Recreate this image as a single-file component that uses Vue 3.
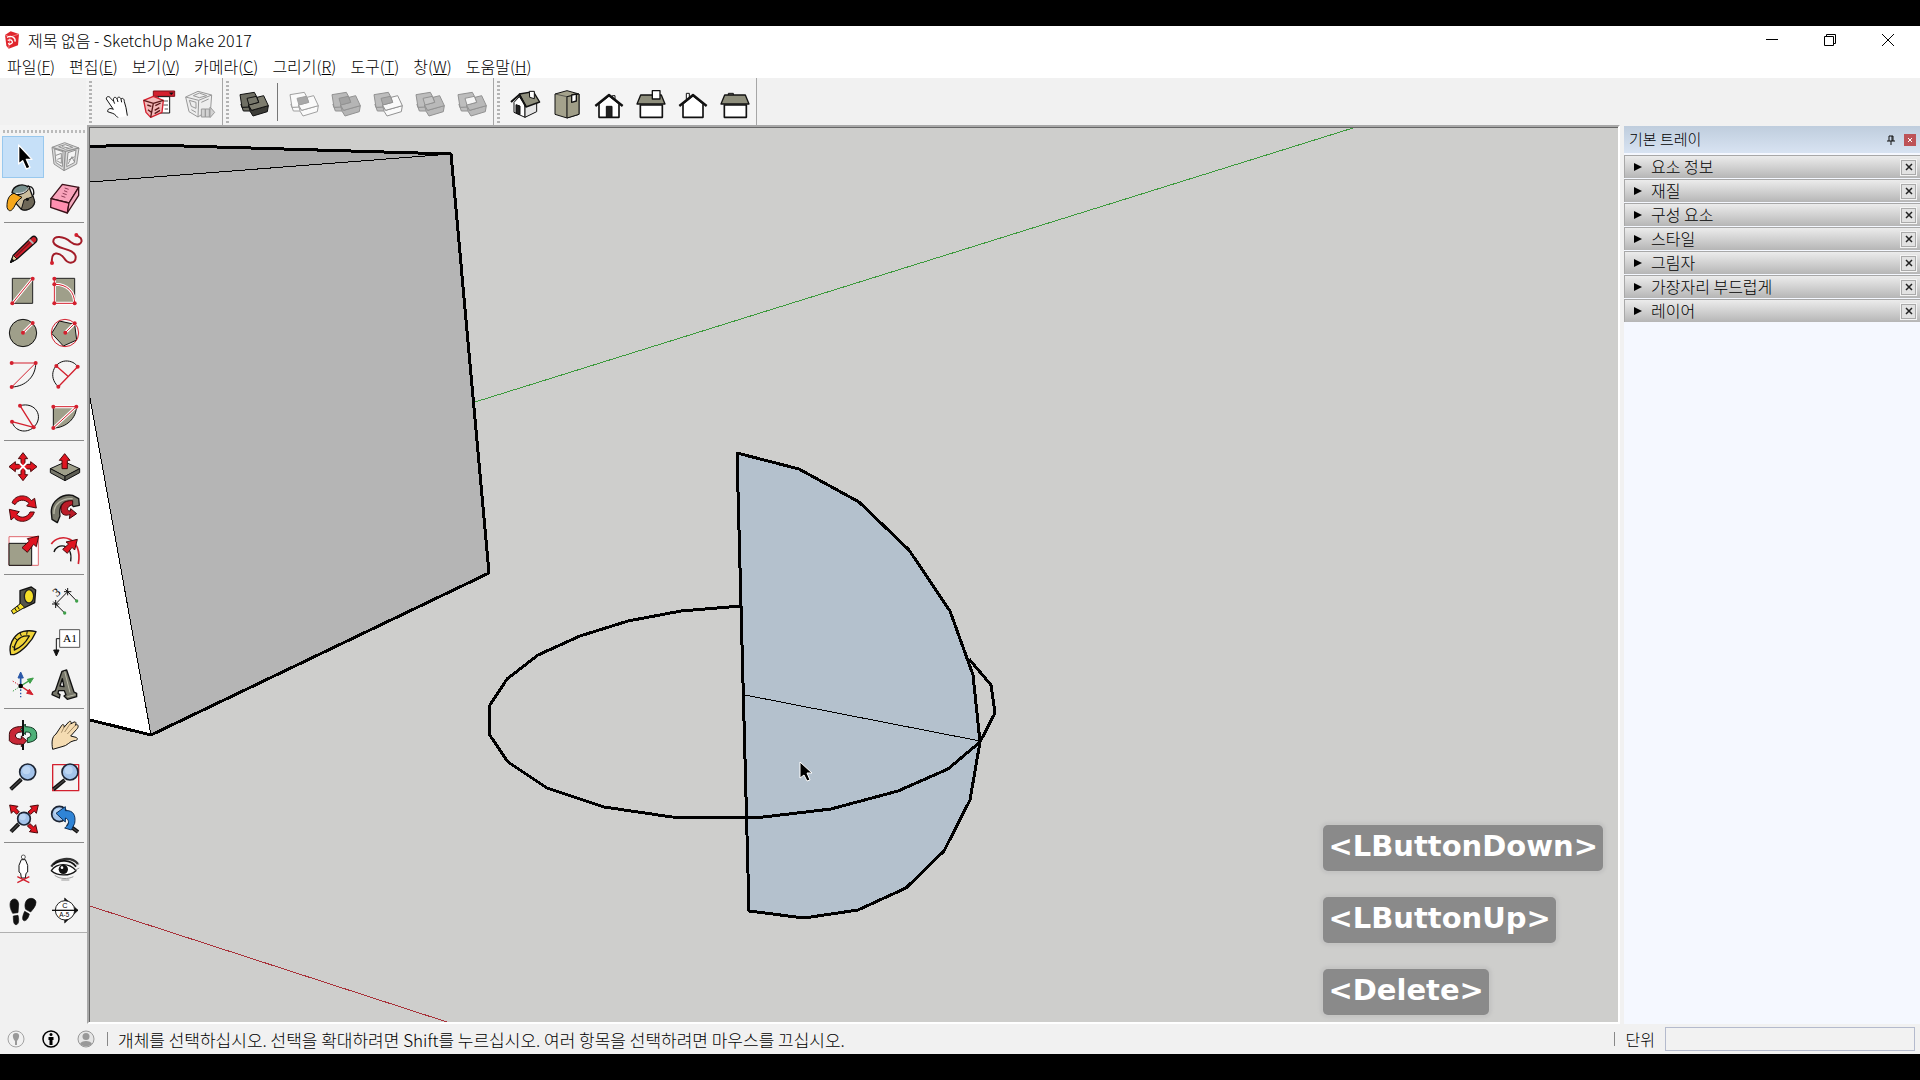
<template>
  <div class="screen">
    <div class="app">

      <header class="titlebar">
        <svg class="logo" viewBox="0 0 48 54">
          <path d="M3 12 L20 1 L45 9 L42 43 L14 53 L7 44 Z" fill="#e0262d" />
          <path d="M3 12 L18 18 L45 9 M18 18 L14 53" stroke="#f8a6a6" stroke-width="2" fill="none" />
          <path d="M9 19 C22 12 36 20 33 32 M11 28 C20 24 26 28 25 36 M13 36 L17 42 M25 36 L17 40" stroke="#fff" stroke-width="4" fill="none" />
        </svg>
        <h1>제목 없음 - SketchUp Make 2017</h1>
        <div class="win-buttons">
          <button aria-label="최소화"><svg viewBox="0 0 12 12"><path d="M0 5.5 H12" /></svg></button>
          <button aria-label="이전 크기로"><svg viewBox="0 0 12 12"><path d="M.5 2.5 H9.5 V11.5 H.5 Z M2.5 2.5 V.5 H11.5 V9.5 H9.5" /></svg></button>
          <button aria-label="닫기"><svg viewBox="0 0 12 12"><path d="M0 0 L12 12 M12 0 L0 12" /></svg></button>
        </div>
      </header>

      <nav class="menubar">
        <button v-for="m in menus" :key="m.key">{{ m.label }}(<u>{{ m.key }}</u>)</button>
      </nav>

      <div class="toolbar">
        <div v-for="(group, i) in topGroups" :key="i" class="group">
          <span class="grip"></span>
          <template v-for="tool in group" :key="tool.name">
            <span v-if="tool.name === 'sep'" class="vsep"></span>
            <button v-else class="tool" :aria-label="tool.name">
              <svg viewBox="0 0 126 126" v-html="tool.art"></svg>
            </button>
          </template>
        </div>
      </div>

      <main class="workspace">
        <aside class="palette">
          <span class="grip-h"></span>
          <div v-for="(group, i) in sideGroups" :key="i" class="tools">
            <button
              v-for="tool in group"
              :key="tool.name"
              class="tool"
              :class="{ active: tool.name === activeTool }"
              :aria-label="tool.name"
              @click="activeTool = tool.name"
            >
              <svg viewBox="0 0 126 126" v-html="tool.art"></svg>
            </button>
          </div>
        </aside>

        <section class="viewport">
          <svg class="scene" viewBox="90 128 1528 894" preserveAspectRatio="xMinYMin slice">
            <!-- axes -->
            <path d="M475 402 L1353 128" stroke="#3c9a3c" />
            <path d="M90 906 L447 1022" stroke="#a8323a" />
            <!-- box -->
            <path d="M90 147 L123 145 L150 145 L451 154 L90 182 Z" fill="#ababab" />
            <path d="M90 182 L451 154 L489 573 L151 735 L90 398 Z" fill="#b5b5b5" />
            <path d="M90 398 L151 735 L90 720 Z" fill="#fff" />
            <path d="M90 182 L451 154 M90 398 L151 735" stroke="#000" />
            <path d="M90 147 L123 145 L150 145 L451 154 L489 573 L151 735 L90 720" class="edge" />
            <!-- half disc standing on the circle -->
            <path d="M737 453 L799 469 L859 502 L909 550 L950 611 L973 675 L980 742 L970 800 L944 851 L906 888 L858 910 L804 918 L749 911 Z" class="edge face" />
            <path d="M741 606 L681 611 L628 621 L580 636 L538 655 L507 679 L490 705 L489 734 L508 762 L547 788 L604 807 L672 817 L755 818 L831 809 L898 791 L948 769 L980 742 L995 713 L991 685 L969 659" class="edge" />
            <path d="M745 695 L980 741" stroke="#000" />
            <path d="M800 762 V778 L804 775 L807 781 L810 780 L807 773 H812 Z" class="cursor" />
          </svg>
          <div class="keys">
            <kbd v-for="k in pressed" :key="k">{{ k }}</kbd>
          </div>
        </section>

        <aside class="tray">
          <div class="tray-head">
            <h2>기본 트레이</h2>
            <button class="pin" aria-label="고정"><svg viewBox="0 0 8 10"><path d="M2 6 V1 H6 V6 M5 1 V6 M0 6 H8 M4 6 V10" /></svg></button>
            <button class="tray-close" aria-label="트레이 닫기"><svg viewBox="0 0 6 6"><path d="M1 1 L5 5 M5 1 L1 5" /></svg></button>
          </div>
          <div v-for="p in panels" :key="p" class="panel">
            <button class="panel-title"><i></i>{{ p }}</button>
            <button class="panel-close" :aria-label="p + ' 닫기'"><svg viewBox="0 0 8 8"><path d="M1 1 L7 7 M7 1 L1 7" /></svg></button>
          </div>
        </aside>
      </main>

      <footer class="status">
        <svg class="badge" viewBox="0 0 18 18">
          <circle cx="9" cy="9" r="8" fill="none" stroke="#a3a3a3" />
          <path d="M9 3 C4 3 6 9 8 11 V15 H10 V11 C12 9 14 3 9 3 Z" fill="#999" />
        </svg>
        <svg class="badge" viewBox="0 0 18 18">
          <circle cx="9" cy="9" r="8" fill="none" stroke="#000" stroke-width="1.5" />
          <circle cx="9" cy="4.5" r="1.5" />
          <path d="M6.5 7 H11.5 V10 H10.5 V15 H7.5 V10 H6.5 Z" />
        </svg>
        <svg class="badge" viewBox="0 0 18 18">
          <circle cx="9" cy="9" r="8" fill="#e6e6e6" stroke="#999" />
          <circle cx="9" cy="6.5" r="3.5" fill="#999" />
          <path d="M3 14 C4 10 14 10 15 14 C12 17 6 17 3 14 Z" fill="#999" />
        </svg>
        <span class="bar"></span>
        <p>개체를 선택하십시오. 선택을 확대하려면 Shift를 누르십시오. 여러 항목을 선택하려면 마우스를 끄십시오.</p>
        <span class="bar"></span>
        <label for="vcb">단위</label>
        <input id="vcb" type="text">
      </footer>

    </div>
  </div>
</template>

<script setup>
import { ref } from 'vue'

const activeTool = ref('선택')

const menus = [
  { label: '파일', key: 'F' },
  { label: '편집', key: 'E' },
  { label: '보기', key: 'V' },
  { label: '카메라', key: 'C' },
  { label: '그리기', key: 'R' },
  { label: '도구', key: 'T' },
  { label: '창', key: 'W' },
  { label: '도움말', key: 'H' }
]

const panels = ['요소 정보', '재질', '구성 요소', '스타일', '그림자', '가장자리 부드럽게', '레이어']

const pressed = ['<LButtonDown>', '<LButtonUp>', '<Delete>']

// small helpers for the icon drawings, all on a 126 grid
const path = (d, fill = 'none', stroke = '#111', w = 3) =>
  `<path d="${d}" fill="${fill}" stroke="${stroke}" stroke-width="${w}" stroke-linejoin="round"/>`
const red = '#d3202e'
const tan = '#9f9f8a'
const dots = (...pts) => pts.map(([x, y]) => `<circle cx="${x}" cy="${y}" r="6" fill="${red}"/>`).join('')
const redLine = d => path(d, 'none', '#fff', 9) + path(d, 'none', red, 3)

// two overlapping slabs used by every solid tool
const backTop = 'M21 35 L64 28 L72 43 L77 58 L48 66 L51 72 L27 73 Z'
const backSide = 'M24 64 L27 73 L51 70 L55 84 L31 84 Z'
const frontTop = 'M72 43 L92 38 L106 68 L56 82 L46 66 L77 58 Z'
const frontSide = 'M56 82 L106 68 L103 86 L60 99 L52 86 L46 66 Z'
const core = 'M42 46 L70 40 L77 58 L48 66 Z'
const solid = (a, b, c, line, side = b) =>
  path(backSide, a, line) + path(backTop, a, line) + path(frontSide, side, line) + path(frontTop, b, line) + path(core, c, line)

const lens = (x, y, r) =>
  `<circle cx="${x}" cy="${y}" r="${r}" fill="#a3c3ea" stroke="#1c2433" stroke-width="5"/>` +
  `<circle cx="${x - 4}" cy="${y - 5}" r="${r / 2}" fill="#bdd6f3"/>`
const handle = d => path(d, 'none', '#111', 12) + path(d, 'none', '#444', 4)

const cage = (line, fill) =>
  path('M24 34 L62 20 L105 36 L98 84 L60 104 L30 84 Z', fill, line, 3) +
  path('M32 39 L57 47 L55 92 L36 80 Z M72 50 L96 42 L91 80 L68 92 Z M44 32 L64 26 L86 34 L64 40 Z', '#f4f4f4', line, 3) +
  path('M24 34 L64 46 L105 36 M64 46 L60 104', 'none', line, 4) +
  path('M36 58 L52 52 L52 82 L38 74 M52 66 L40 70 M74 72 L92 62 M72 84 L84 62 L90 76 M54 32 L74 36', 'none', line, 3)

const topGroups = [
  [
    {
      name: '인터랙트',
      art: path('M31 48 C30 40 40 38 44 46 L53 55 C50 42 58 40 63 47 C66 40 73 42 75 48 C81 43 85 49 85 56 L90 74 L94 98 L66 104 L60 98 C54 90 44 90 35 86 C34 78 42 74 52 79 Z', '#fff', '#fff', 1) +
        path('M66 104 L60 98 C54 90 44 90 35 86 C34 78 42 74 52 79 L31 48 C30 40 40 38 44 46 L53 55 C50 42 58 40 63 47 C66 40 73 42 75 48 C81 43 85 49 85 56 L90 74 L94 98 M53 55 L56 62 M63 47 L66 57 M75 48 L77 58')
    },
    {
      name: '구성 요소 옵션',
      art: path('M46 24 H110 V40 H46 Z', red, '#7a1018', 3) + path('M94 29 H106 L100 36 Z', '#111', '#111', 1) +
        path('M60 41 H95 V90 H60 Z', '#fff') + path('M76 54 H90 M76 66 H90 M80 78 H90', 'none', '#555', 3) +
        path('M17 52 L46 40 L76 52 L72 88 L38 103 L24 88 Z', '#f3b9b9', red, 4) +
        path('M17 52 L46 61 L76 52 M46 61 L38 103 M28 66 L40 70 M52 68 L68 60 M50 82 L64 74 M30 80 L40 88 M50 92 L66 82', 'none', '#5a1818', 4)
    },
    {
      name: '구성 요소 속성',
      art: path('M17 42 L54 25 L95 36 L92 76 L54 102 L27 86 Z', '#eee', '#999') +
        path('M17 42 L56 52 L95 36 M56 52 L54 102 M28 52 L48 58 V76 L34 70 Z M64 58 L86 48 M34 80 L48 88 M40 38 L58 30 L80 38 L58 44 Z', 'none', '#999') +
        path('M64 78 H76 V102 H64 Z M76 78 H88 V102 H76 Z M90 72 L104 88 L90 104 Z', '#d2d2d2', '#999')
    }
  ],
  [
    { name: '외곽 셸', art: solid('#6f6f64', '#7e7d6f', '#77776b', '#111', '#3d3d38') },
    { name: 'sep' },
    { name: '교차', art: solid('#fafafa', '#fafafa', '#a8a8a8', '#a0a0a0') },
    { name: '결합', art: solid('#bababa', '#b5b5b5', '#a2a2a2', '#929292') },
    { name: '빼기', art: solid('#bdbdbd', '#fafafa', '#aaa', '#929292') },
    { name: '트림', art: solid('#bdbdbd', '#b9b9b9', '#c5c5c5', '#929292') },
    { name: '분할', art: solid('#bdbdbd', '#b9b9b9', '#f6f6f6', '#929292') }
  ],
  [
    {
      name: '등각',
      art: path('M30 58 L46 41 L63 65 V103 L30 88 Z', '#fff') + path('M63 66 L98 54 V86 L63 103 Z', '#e5e5e5') +
        path('M36 65 L48 69 V95 L36 90 Z', '#222') + path('M46 33 L88 26 L107 57 L66 72 Z', '#8e8e7c', '#111', 4) +
        path('M21 57 L46 35 L66 71', 'none', '#111', 6) + path('M76 25 H91 V47 L77 43 Z', '#fff')
    },
    {
      name: '위',
      art: path('M27 33 L63 23 L99 33 V94 L63 105 L27 94 Z', '#a4a28c') + path('M63 41 V105 M27 33 L63 41 L99 33', 'none', '#333', 2) +
        path('M63 41 L99 33 V94 L63 105 Z', '#a09e88') + path('M77 36 L91 33 V54 L77 58 Z', '#fff', '#111', 4)
    },
    {
      name: '앞',
      art: path('M73 44 V38 H81 V52', '#fff') + path('M33 62 L63 38 L93 62 V103 H33 Z', '#fff', '#111', 5) +
        path('M22 69 L63 36 L104 69', 'none', '#111', 7) + path('M55 70 H72 V103 H55 Z', '#222')
    },
    {
      name: '오른쪽',
      art: path('M31 66 H97 V103 H31 Z', '#fff', '#111', 5) + path('M32 36 H94 L105 63 H21 Z', '#8e8e7c', '#111', 4) + path('M67 23 H90 V48 H67 Z', '#fff', '#111', 4)
    },
    {
      name: '뒤',
      art: path('M43 49 V31 H52 V45', '#fff') + path('M33 62 L63 38 L93 62 V103 H33 Z', '#fff', '#111', 5) +
        path('M22 69 L63 36 L104 69', 'none', '#111', 7)
    },
    {
      name: '왼쪽',
      art: path('M43 36 V31 H58 V36', '#999') + path('M31 66 H97 V103 H31 Z', '#fff', '#111', 5) + path('M32 36 H94 L105 63 H21 Z', '#8e8e7c', '#111', 4)
    }
  ]
]

const sideGroups = [
  [
    { name: '선택', art: path('M50 27 V84 L62 74 L73 99 L84 94 L73 70 H90 Z', '#000', '#fff', 4) },
    { name: '구성 요소 만들기', art: cage('#929292', '#dcdcdc') },
    {
      name: '페인트통',
      art: path('M76 34 C80 16 100 30 94 52', 'none', '#111', 4) + path('M36 38 L80 24 L98 72 C94 92 72 100 58 94 L42 76 Z', '#cbbd9d', '#111', 4) +
        path('M58 94 L66 66 L94 55 L98 72 C94 92 72 100 58 94', '#6e6757', '#111', 3) +
        path('M30 44 C34 22 62 14 80 28 C76 44 48 56 30 44 Z', '#78908e', '#111', 4) + path('M40 46 C66 48 74 38 80 28', 'none', '#fff', 3) +
        path('M36 46 C22 50 14 64 15 88 C20 104 30 100 38 84 C42 72 52 64 60 58 Z', '#f6a81c', '#111', 3) +
        '<circle cx="76" cy="64" r="5" fill="#111"/>'
    },
    {
      name: '지우개',
      art: path('M55 19 L104 28 L75 75 L21 62 Z', '#f9a3bb', '#3a1018', 4) + path('M21 62 L75 75 L70 105 L20 88 Z', '#ff8fb0', '#3a1018', 4) +
        path('M104 28 V52 L70 105 L75 75 Z', '#f3a9bd', '#3a1018', 4) +
        path('M62 30 L74 34 M60 38 L70 42 M56 46 L68 50 M52 54 L64 58', 'none', '#8c3b55', 3)
    }
  ],
  [
    {
      name: '선',
      art: path('M26 103 L34 82 L90 27 C98 20 110 32 102 42 L45 93 Z', '#cf1f2b', '#111', 4) + path('M26 103 L34 82 L45 93 Z', '#e5cd9d') +
        path('M26 103 L30 93 L36 98 Z', '#111') + path('M82 35 L94 47', 'none', '#b9b9b9', 6) + path('M42 84 L84 43', 'none', '#7b121a', 4)
    },
    {
      name: '자유형',
      art: path('M24 104 C20 68 46 72 60 90 C74 112 96 106 95 86 C90 58 34 66 28 42 C26 20 60 24 80 42 C100 58 120 46 110 30 L97 21', 'none', '#a31c28', 6) + dots([24, 105], [97, 21])
    },
    { name: '직사각형', art: path('M31 25 H92 V100 H31 Z', tan, '#222', 3) + redLine('M31 100 L92 25') + dots([31, 100], [92, 26]) },
    { name: '회전된 직사각형', art: path('M31 25 H92 V100 H31 Z', tan, '#222', 3) + redLine('M31 25 V100 H92 M31 43 C70 42 92 66 92 100') + dots([31, 26], [31, 43], [31, 100], [92, 100]) },
    { name: '원', art: `<circle cx="63" cy="63" r="41" fill="${tan}" stroke="#111" stroke-width="3"/>` + redLine('M63 62 L92 33') + dots([63, 62], [92, 33]) },
    { name: '다각형', art: path('M23 64 L46 27 L92 37 L98 84 L58 102 Z', tan) + `<circle cx="63" cy="63" r="41" fill="none" stroke="${red}" stroke-width="3"/>` + redLine('M64 62 L92 34') + dots([64, 62], [92, 34]) },
    { name: '호', art: path('M101 27 C102 65 72 98 29 99') + path('M29 27 H101 L29 99', 'none', red) + dots([29, 27], [101, 27], [29, 99]) },
    { name: '2점 호', art: path('M43 98 C10 68 30 24 64 21 C82 20 94 28 101 38') + path('M43 98 L101 38 M37 36 L71 66', 'none', red, 4) + dots([37, 36], [101, 38], [43, 98]) },
    { name: '3점 호', art: path('M54 29 C100 16 128 62 95 94 C72 114 38 106 30 77') + path('M54 29 L95 94 L30 77', 'none', red, 4) + dots([54, 29], [30, 77], [95, 94]) },
    { name: '파이', art: path('M28 32 H97 C98 66 66 96 28 96 Z', tan) + redLine('M28 32 H97 L28 96') + dots([28, 32], [97, 32], [28, 96]) }
  ],
  [
    {
      name: '이동',
      art: path('M63 20 L77 38 H69 V55 H86 V47 L105 62 L86 77 V69 H69 V86 H77 L63 104 L49 86 H57 V69 H40 V77 L21 62 L40 47 V55 H57 V38 H49 Z', '#df1420', '#4a0a0c') +
        path('M48 47 L78 77 M78 47 L48 77', 'none', '#fff', 6)
    },
    {
      name: '밀기/끌기',
      art: path('M19 68 L63 48 L107 68 L63 91 Z', tan) + path('M19 68 L63 91 V104 L19 80 Z', '#77776a') + path('M107 68 L63 91 V104 L107 80 Z', '#5c5c52') +
        path('M62 23 L78 43 H70 V68 H54 V43 H46 Z', '#df1420', '#4a0a0c')
    },
    {
      name: '회전',
      art: path('M30 44 C40 18 76 18 88 38 L98 31 L103 60 L74 54 L81 46 C68 32 48 34 39 50 Z', '#df1420', '#4a0a0c') +
        path('M97 72 C86 106 48 106 36 88 L27 96 L22 64 L52 71 L44 79 C56 94 78 88 84 72 Z', '#df1420', '#4a0a0c')
    },
    {
      name: '따라가기',
      art: path('M22 74 C20 40 54 16 86 22 L104 32 L106 52 L88 56 L76 40 C54 40 44 58 48 84 L40 104 L24 94 Z', '#77776a', '#111', 4) +
        path('M30 78 C28 48 54 30 86 32', 'none', '#b8b8a6', 4) +
        path('M86 38 C58 36 44 54 54 76 C62 84 72 82 78 79 L76 92 L98 77 L80 62 L79 69 C66 70 68 54 86 50 Z', '#bb1c28', '#3d080b', 3)
    },
    {
      name: '배율',
      art: path('M21 20 H109 V106 H21 Z', '#fff', '#e06a70', 3) + path('M21 40 H89 V106 H21 Z', tan) +
        path('M110 18 L103 50 L95 43 L76 67 L60 53 L82 33 L76 26 Z', '#df1420', '#4a0a0c')
    },
    {
      name: '오프셋',
      art: path('M22 42 C46 6 118 20 103 102', 'none', red, 5) + path('M30 66 C38 38 88 38 80 94', 'none', '#111', 4) +
        path('M100 28 L92 60 L84 52 L70 70 L56 58 L74 42 L66 36 Z', '#df1420', '#4a0a0c')
    }
  ],
  [
    {
      name: '줄자',
      art: path('M54 32 L88 21 L101 30 L98 68 L66 84 L54 74 Z', '#55554c', '#111', 4) + '<ellipse cx="81" cy="49" rx="14" ry="20" fill="#f4de28" stroke="#222" stroke-width="4"/>' +
        path('M56 70 L28 92 L34 102 L68 82 Z', '#f4de28') + path('M46 78 L52 88 M38 84 L44 94', 'none', '#111', 3)
    },
    {
      name: '치수',
      art: path('M35 72 L71 35 M71 35 L98 63 M35 72 L62 99 M35 60 V84 M24 72 H46 M28 65 L42 79 M71 24 V46 M60 35 H82 M64 28 L78 42', 'none', '#111', 3) +
        '<circle cx="98" cy="63" r="5" fill="#3fa04a"/><circle cx="62" cy="99" r="5" fill="#3fa04a"/><text x="0" y="0" transform="translate(38 52) rotate(-40)" font-family="Liberation Serif, serif" font-size="36">3</text>'
    },
    {
      name: '각도기',
      art: path('M102 29 C76 22 50 28 36 48 C24 64 22 82 26 98 L36 98 C60 90 90 58 102 29 Z M82 42 C64 40 52 46 44 58 C38 68 36 74 37 84 C54 78 72 60 82 42 Z', '#f0d43a', '#111', 4) +
        path('M30 74 L37 76 M38 48 L46 54 M54 32 L58 42 M76 26 L74 38', 'none', '#111', 3)
    },
    {
      name: '텍스트',
      art: path('M47 23 H107 V76 H47 Z', '#fff', '#555', 3) + path('M47 50 H37 V84') + path('M29 84 H45 L37 102 Z', '#111') +
        '<text x="57" y="59" font-family="Liberation Serif, serif" font-size="34">A1</text>'
    },
    {
      name: '축',
      art: path('M56 66 V30', 'none', '#2a58a8', 5) + path('M56 24 L64 42 H48 Z', '#2a58a8', '#2a58a8') + path('M56 66 L82 50', 'none', '#3fa04a', 4) + path('M94 42 L84 58 L76 46 Z', '#3fa04a', '#3fa04a') +
        path('M56 66 L80 82', 'none', red, 4) + path('M93 92 L74 88 L82 76 Z', red, red) +
        '<path d="M56 66 V100" stroke="#2a58a8" stroke-width="4" stroke-dasharray="5 5"/><path d="M56 66 L30 50" stroke="#c23" stroke-width="3" stroke-dasharray="4 4"/><path d="M56 66 L32 82" stroke="#3fa04a" stroke-width="3" stroke-dasharray="4 4"/><circle cx="56" cy="66" r="7"/>'
    },
    {
      name: '3D 텍스트',
      art: path('M54 22 L68 18 L90 84 L98 88 L98 98 L70 106 L60 96 L66 92 L61 80 L44 80 L42 88 L48 92 L46 102 L24 92 L26 84 L34 80 Z M55 44 L48 66 L60 68 Z', '#77776a', '#111', 4) +
        path('M62 22 L78 86 M70 98 L94 92', 'none', '#b8b8a6', 3)
    }
  ],
  [
    {
      name: '궤도',
      art: path('M62 38 C34 36 22 48 22 62 L22 80 C32 92 48 92 58 90 V98 L74 80 L58 66 V75 C48 76 42 72 40 66 C42 56 50 54 62 54 Z', '#c72735', '#3d080b') +
        path('M70 38 C94 38 104 48 104 62 V72 C98 82 88 84 76 86 V72 C84 70 88 66 86 60 C84 54 78 54 70 54 V62 L56 46 L70 30 Z', '#4eb078', '#0e3520') +
        path('M63 18 V66 M63 90 V108', 'none', '#111', 6)
    },
    {
      name: '이동 보기',
      art: path('M26 106 C22 84 24 68 36 60 L52 36 C56 28 62 32 60 40 L74 24 C80 18 84 26 80 30 L90 24 C96 22 98 28 94 34 L98 32 C104 32 104 40 98 46 L80 66 L96 70 C104 74 100 80 90 80 C76 82 70 96 54 98 Z', '#f5dcb2', '#111', 3) +
        path('M60 40 L52 56 M78 30 L62 54 M94 34 L70 60', 'none', '#7a6240', 2)
    },
    { name: '확대/축소', art: handle('M58 70 L26 100') + lens(77, 48, 24) },
    { name: '창 확대/축소', art: path('M26 26 H104 V104 H26 Z', 'none', red, 4) + handle('M62 72 L28 100') + lens(78, 48, 24) },
    {
      name: '범위 확대/축소',
      art: path('M23 21 L48 25 L42 31 L52 42 L44 49 L34 39 L28 46 Z M109 21 L84 25 L90 31 L78 42 L86 49 L97 39 L103 46 Z M107 105 L82 101 L88 95 L76 84 L84 77 L95 87 L101 80 Z', '#df1420', '#4a0a0c') +
        handle('M50 78 L27 101') + lens(66, 62, 19)
    },
    {
      name: '이전',
      art: lens(46, 48, 23) + handle('M70 78 L102 102') + path('M36 46 L64 26 V38 C88 36 96 52 92 76 L82 96 L62 90 C80 78 74 62 64 60 V72 Z', '#2f84d6', '#0d2f58', 3)
    }
  ],
  [
    {
      name: '카메라 배치',
      art: '<circle cx="64" cy="27" r="6" fill="#fff" stroke="#111" stroke-width="2"/>' + path('M58 35 H70 L77 52 V72 L72 76 L70 90 H58 L56 76 L51 72 V52 Z', '#fff', '#111', 3) +
        path('M46 86 L82 104 M82 86 L46 104', 'none', red, 4)
    },
    {
      name: '둘러보기',
      art: path('M22 56 C38 30 82 24 102 48', 'none', '#333', 7) + path('M22 68 C38 44 76 44 96 68 C76 86 40 84 22 68 Z', '#fff', '#111', 4) +
        '<circle cx="58" cy="64" r="14" fill="#111"/><circle cx="54" cy="59" r="4" fill="#fff"/>' +
        path('M28 50 C46 34 80 34 96 56', 'none', '#111', 5) + path('M32 82 C48 94 72 94 88 86 M52 96 L76 96 M94 66 L106 60 M96 52 L106 48', 'none', '#999', 3)
    },
    {
      name: '탐색',
      art: path('M26 34 C34 22 48 26 50 42 L48 68 L32 70 C24 56 22 44 26 34 Z M34 78 L48 76 C52 92 50 104 42 104 C34 104 34 90 34 78 Z', '#111', '#111', 2) +
        path('M72 34 C80 20 100 24 102 36 C102 50 92 58 86 66 L71 58 C68 50 68 42 72 34 Z M68 64 L82 72 C78 90 68 96 63 90 C60 84 64 72 68 64 Z', '#111', '#111', 2)
    },
    {
      name: '단면',
      art: path('M62 24 L102 61 L62 99 Z', '#111', '#111', 2) + '<circle cx="63" cy="61" r="29" fill="#fff" stroke="#222" stroke-width="3"/>' + path('M24 61 H102', 'none', '#111', 4) +
        '<text x="55" y="55" font-family="Liberation Sans, sans-serif" font-size="22">C</text><text x="46" y="80" font-family="Liberation Sans, sans-serif" font-size="19">A-5</text>'
    }
  ]
]
</script>

<style>
body {
  margin: 0;
  background: #000;
}
</style>

<style scoped>
.screen {
  box-sizing: border-box;
  height: 100vh;
  padding: 26px 0;
  background: #000;
  font-family: "Noto Sans CJK KR", sans-serif;
  font-size: 16px;
  font-weight: 300;
  color: #000;
}

.app {
  display: flex;
  flex-direction: column;
  height: 100%;
  background: #f1f1f1;
}

button {
  padding: 0;
  border: none;
  background: none;
  font: inherit;
  color: inherit;
}

h1,
h2,
p {
  margin: 0;
  font-size: 16px;
  font-weight: inherit;
}

svg {
  display: block;
}

/* title and menu */
.titlebar {
  display: flex;
  align-items: center;
  height: 28px;
  padding-left: 4px;
  background: #fff;
}

.logo {
  width: 16px;
  height: 18px;
  margin-right: 8px;
}

.win-buttons {
  display: flex;
  margin-left: auto;
  padding-right: 3px;
}

.win-buttons button {
  display: grid;
  place-items: center;
  width: 58px;
  height: 28px;
}

.win-buttons svg {
  width: 12px;
  height: 12px;
  fill: none;
  stroke: #000;
}

.menubar {
  display: flex;
  gap: 14px;
  height: 24px;
  padding-left: 7px;
  background: #fff;
}

.menubar button {
  line-height: 24px;
}

/* top toolbar */
.toolbar {
  display: flex;
  height: 47px;
  padding-left: 86px;
}

.group {
  display: flex;
  align-items: center;
  padding-left: 3px;
  border-right: 1px solid #a6a6a6;
  background: #f4f4f4;
}

.grip {
  width: 3px;
  height: 42px;
  margin-right: 4px;
  background: repeating-linear-gradient(#b4b4b4 0 2px, transparent 2px 4px);
}

.vsep {
  width: 1px;
  height: 38px;
  margin: 0 5px 0 2px;
  background: #777;
}

.tool {
  width: 42px;
  height: 42px;
}

.group .tool {
  padding-top: 2px;
}

.tool svg {
  width: 42px;
  height: 42px;
}

.tool.active {
  background: #c6e0f8;
  box-shadow: inset 0 0 0 1px #98c8ee;
}

/* middle part */
.workspace {
  display: flex;
  flex: 1;
  min-height: 0;
}

.palette {
  align-self: flex-start;
  width: 84px;
  padding: 5px 1px 0 2px;
  border-bottom: 1px solid #b0b0b0;
  background: #f4f4f4;
}

.grip-h {
  display: block;
  height: 3px;
  margin: 0 1px 3px;
  background: repeating-linear-gradient(90deg, #bbb 0 2px, transparent 2px 4px);
}

.tools {
  display: grid;
  grid-template-columns: 42px 42px;
}

.tools + .tools {
  padding-top: 8px;
  background: linear-gradient(#8a8a8a, #8a8a8a) 2px 2px / 80px 1px no-repeat;
}

.viewport {
  position: relative;
  flex: 1;
  min-width: 0;
  border: 2px solid #fff;
  border-top-color: #a8a8a8;
  border-left-color: #a8a8a8;
  background: #cececc;
}

.scene {
  box-sizing: border-box;
  width: 100%;
  height: 100%;
  border-top: 1px solid #666;
  border-left: 1px solid #666;
  fill: none;
  shape-rendering: crispEdges;
}

.edge {
  stroke: #000;
  stroke-width: 3;
  stroke-linejoin: round;
}

.face {
  fill: #b4c1cd;
}

.cursor {
  fill: #000;
  stroke: #fff;
  shape-rendering: auto;
}

.keys {
  position: absolute;
  right: 15px;
  bottom: 7px;
  display: flex;
  flex-direction: column;
  align-items: flex-start;
  gap: 26px;
}

kbd {
  height: 46px;
  padding: 0 5px;
  border-radius: 5px;
  background: #8a8a8a;
  box-shadow: 0 0 3px 3px #c4c4c3;
  font: bold 29px/42px "DejaVu Sans", sans-serif;
  color: #fff;
}

/* right tray */
.tray {
  display: flex;
  flex-direction: column;
  gap: 1px;
  width: 296px;
  margin: 1px 0 0 4px;
  background: #f5f8ff;
}

.tray-head {
  display: flex;
  align-items: center;
  height: 27px;
  margin-bottom: 1px;
  padding: 0 4px 0 5px;
  background: linear-gradient(#bfcddd, #d8e3f2);
}

.tray-head h2 {
  height: 25px;
  font-size: 15px;
  line-height: 23px;
}

.pin {
  margin-left: auto;
}

.pin svg {
  width: 8px;
  height: 10px;
  fill: none;
  stroke: #111;
}

.tray-close {
  display: grid;
  place-items: center;
  width: 12px;
  height: 12px;
  margin-left: 9px;
  background: #bd5257;
}

.tray-close svg {
  width: 6px;
  height: 6px;
  stroke: #fff;
}

.panel {
  box-sizing: border-box;
  display: flex;
  align-items: center;
  height: 23px;
  padding: 0 3px 0 9px;
  border-top: 1px solid #a8a8a8;
  border-left: 1px solid #a8a8a8;
  background: linear-gradient(#ececec, #b6b6b6);
}

.panel-title {
  display: flex;
  flex: 1;
  align-items: center;
  height: 22px;
  line-height: 20px;
  padding-bottom: 2px;
}

.panel-title i {
  margin: 2px 9px 0 0;
  border: 4px solid transparent;
  border-left: 8px solid #000;
  border-right: 0;
}

.panel-close {
  display: grid;
  place-items: center;
  width: 17px;
  height: 17px;
  border: 1px solid #f4f4f4;
  outline: 1px solid #aaa;
  outline-offset: -2px;
  background: #e2e2e2;
}

.panel-close svg {
  width: 8px;
  height: 8px;
  stroke: #222;
  stroke-width: 1.5;
}

/* status bar */
.status {
  display: flex;
  align-items: center;
  height: 30px;
  padding: 0 5px 0 7px;
}

.badge {
  width: 18px;
  height: 18px;
  margin-right: 17px;
}

.bar {
  width: 1px;
  height: 14px;
  background: #888;
}

.bar:first-of-type {
  margin-right: 10px;
  margin-left: -5px;
}

.status p {
  flex: 1;
  font-size: 17px;
}

.status label {
  margin: 0 10px 0 11px;
}

.status input {
  box-sizing: border-box;
  width: 250px;
  height: 24px;
  padding: 0 4px;
  border: 1px solid #b4bacd;
  background: #f2f2f2;
  font: inherit;
}
</style>
